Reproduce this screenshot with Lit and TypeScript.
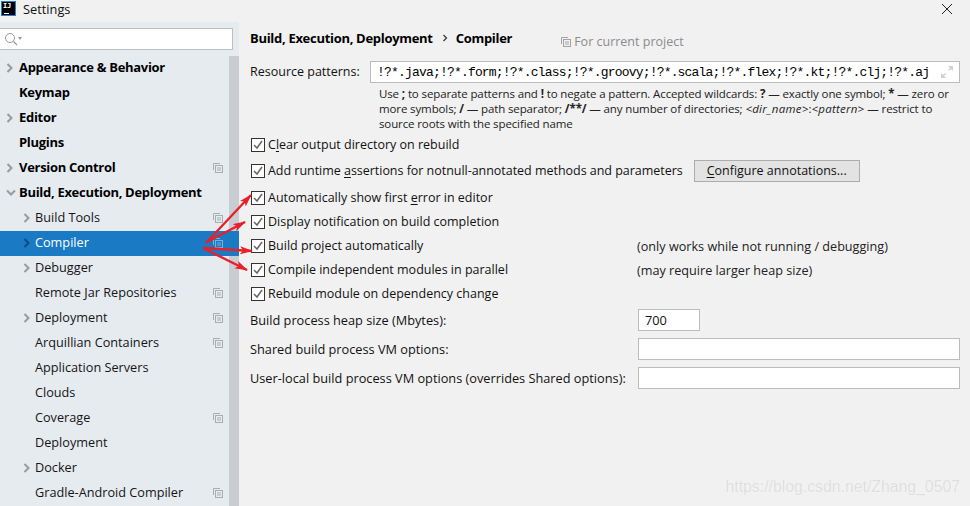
import { LitElement, html, css, svg } from "lit";
import { customElement } from "lit/decorators.js";

type Item = { t: string; lvl: 0 | 1; bold?: boolean; arrow?: "r" | "d"; proj?: boolean; sel?: boolean };
const items: Item[] = [
  { t: "Appearance & Behavior", lvl: 0, bold: true, arrow: "r" },
  { t: "Keymap", lvl: 0, bold: true },
  { t: "Editor", lvl: 0, bold: true, arrow: "r" },
  { t: "Plugins", lvl: 0, bold: true },
  { t: "Version Control", lvl: 0, bold: true, arrow: "r", proj: true },
  { t: "Build, Execution, Deployment", lvl: 0, bold: true, arrow: "d" },
  { t: "Build Tools", lvl: 1, arrow: "r", proj: true },
  { t: "Compiler", lvl: 1, arrow: "r", proj: true, sel: true },
  { t: "Debugger", lvl: 1, arrow: "r" },
  { t: "Remote Jar Repositories", lvl: 1, proj: true },
  { t: "Deployment", lvl: 1, arrow: "r", proj: true },
  { t: "Arquillian Containers", lvl: 1, proj: true },
  { t: "Application Servers", lvl: 1 },
  { t: "Clouds", lvl: 1 },
  { t: "Coverage", lvl: 1, proj: true },
  { t: "Deployment", lvl: 1 },
  { t: "Docker", lvl: 1, arrow: "r" },
  { t: "Gradle-Android Compiler", lvl: 1, proj: true },
];

const projIcon = html`<svg class="proj" width="10" height="10" viewBox="0 0 10 10" fill="none" stroke="currentColor" stroke-width="1"><path d="M.5 7V.5H7"/><rect x="2.5" y="2.5" width="7" height="7"/><path d="M4 5h4M4 7h4"/></svg>`;
const chevR = html`<svg class="chev" width="8" height="10" viewBox="0 0 8 10" fill="none" stroke="currentColor" stroke-width="2"><path d="M1.5 1l4 4-4 4"/></svg>`;
const chevD = html`<svg class="chev down" width="10" height="8" viewBox="0 0 10 8" fill="none" stroke="currentColor" stroke-width="2"><path d="M1 1.5l4 4 4-4"/></svg>`;

const arrows: [number, number, number, number][] = [
  [206, 243, 251, 195],
  [207, 242, 245, 222],
  [203, 248, 252, 251],
  [203, 248, 247, 270],
];

@customElement("app-root")
export class AppRoot extends LitElement {
  static styles = css`
    :host { display: block; position: relative; width: 970px; height: 506px; overflow: hidden; background: #f1f1f1; color: #111; font: 12.6px/18px "Open Sans", "Noto Sans", sans-serif; }
    u { text-decoration: underline; text-underline-offset: 2px; }
    .title { height: 22px; box-sizing: border-box; display: flex; align-items: center; background: #f1f1f1; padding: 0 17px 5px 1px; }
    .logo { width: 15px; height: 15px; background: #000; border: 1px solid #2a7bd0; box-sizing: border-box; color: #fff; font: bold 7px/9px "DejaVu Sans Mono", monospace; position: relative; letter-spacing: -.3px; padding-left: 1px; flex: none; }
    .logo i { position: absolute; left: 2px; bottom: 1px; width: 5px; height: 1px; background: #fff; }
    .title span { margin-left: 7px; flex: 1; font-size: 12.8px; }
    .close { flex: none; }
    .main { display: flex; height: 484px; }
    .side { width: 239px; flex: none; background: #e6ebf0; display: flex; flex-direction: column; }
    .search { height: 20px; margin: 6px 6px 0 0; background: #fff; border: 1px solid #bdbdbd; border-left: none; display: flex; align-items: center; padding-left: 4px; flex: none; }
    .body { display: flex; flex: 1; margin-top: 6px; min-height: 0; }
    .tree { flex: 1; min-width: 0; position: relative; }
    .track { width: 10px; background: #c9cdd1; flex: none; }
    .row { height: 25px; font-size: 12.7px; position: relative; color: #151515; }
    .row.b { font-size: 13px; font-weight: 700; color: #000; letter-spacing: -.3px; }
    .row .tx { position: absolute; top: 2px; white-space: nowrap; }
    .row.l0 .tx { left: 19px; }
    .row.l1 .tx { left: 35px; }
    .row .chev { position: absolute; top: 7px; color: #9a9a9a; }
    .row .chev.down { top: 8px; }
    .row.l0 .chev { left: 6px; }
    .row.l1 .chev { left: 23px; }
    .row .proj { position: absolute; top: 7px; left: 213px; color: #a9adb2; }
    .row.sel { background: #1a7ac4; color: #fff; width: 239px; z-index: 1; }
    .row.sel .chev { color: #0d4c80; }
    .row.sel .proj { color: #7fb0d8; }
    .content { flex: 1; min-width: 0; padding: 6px 10px 0 11px; display: flex; flex-direction: column; }
    .crumb { height: 20px; display: flex; align-items: center; font-size: 13px; font-weight: 700; color: #000; white-space: nowrap; letter-spacing: -.3px; }
    .crumb .sep { margin: 0 8px 0 9px; flex: none; color: #333; }
    .crumb .cur { font-size: 12.5px; letter-spacing: 0; font-weight: 400; color: #8c8c8c; display: flex; align-items: center; gap: 3px; margin: 7px 0 0 49px; }
    .crumb .cur svg { color: #a4a4a4; }
    .res { display: flex; align-items: center; margin-top: 13px; height: 22px; }
    .res label { width: 120px; flex: none; font-size: 12.5px; }
    .inp { background: #fff; border: 1px solid #bcbcbc; box-sizing: border-box; height: 22px; }
    .res .inp { flex: 1; display: flex; align-items: center; justify-content: space-between; padding: 0 5px 0 6px; font: 13px "Liberation Mono", monospace; color: #000; letter-spacing: -.81px; white-space: nowrap; min-width: 0; }
    .help { margin: 3px 0 0 129px; font-size: 11.5px; letter-spacing: -.12px; line-height: 15px; color: #222; white-space: nowrap; }
    .help b { font-weight: 700; }
    .help em { font-style: italic; letter-spacing: .25px; }
    .opts { margin-top: 2px; display: grid; grid-template-columns: 388px 1fr; align-items: center; }
    .cb { display: flex; align-items: center; gap: 3px; padding-left: 1px; white-space: nowrap; height: 24px; font-size: 12.5px; }
    .cb svg { flex: none; }
    .note { color: #222; white-space: nowrap; height: 24px; line-height: 24px; font-size: 12.65px; margin-left: -1px; }
    .first { margin-bottom: 1px; }
    .add { grid-column: 1 / 3; display: flex; align-items: center; margin-bottom: 2px; height: 26px; }
    .add .cb { letter-spacing: -.03px; }
    .btn { margin-left: 11px; width: 166px; height: 22px; box-sizing: border-box; background: #e3e3e3; border: 1px solid #adadad; text-align: center; line-height: 20px; flex: none; font-size: 12.5px; }
    .fields { margin-top: 3px; display: grid; grid-template-columns: 388px 1fr; row-gap: 7px; align-items: center; font-size: 12.75px; }
    .fields .num { width: 62px; padding-left: 6px; line-height: 20px; }
    .fields div { white-space: nowrap; }
    .arrows { position: absolute; left: 0; top: 0; pointer-events: none; z-index: 2; }
    .wm { position: absolute; right: 10px; bottom: 7px; font: 15.8px/24px "Liberation Sans", sans-serif; color: #dedede; text-shadow: 0 0 1px #fff; white-space: nowrap; }
  `;

  private cb(label: unknown) {
    return html`<div class="cb"><svg width="14" height="14" viewBox="0 0 14 14"><rect x=".5" y=".5" width="13" height="13" fill="#fff" stroke="#333"/><path d="M3 7l3 3 5-7" fill="none" stroke="#666" stroke-width="1.5"/></svg><span>${label}</span></div>`;
  }

  render() {
    return html`
      <div class="title">
        <div class="logo">IJ<i></i></div>
        <span>Settings</span>
        <svg class="close" width="12" height="12" viewBox="0 0 12 12" stroke="#222" fill="none"><path d="M1 1l10 10M11 1L1 11"/></svg>
      </div>
      <div class="main">
        <div class="side">
          <div class="search">
            <svg width="20" height="14" viewBox="0 0 20 14" fill="none"><circle cx="6" cy="6" r="4.5" stroke="#9a9a9a"/><path d="M9.5 9.5L13 13" stroke="#9a9a9a" stroke-width="1.3"/><path d="M14 5h4l-2 3z" fill="#9a9a9a"/></svg>
          </div>
          <div class="body">
            <div class="tree">
              ${items.map((i) => html`<div class="row l${i.lvl} ${i.bold ? "b" : ""} ${i.sel ? "sel" : ""}">
                ${i.arrow === "r" ? chevR : i.arrow === "d" ? chevD : ""}
                <span class="tx">${i.t}</span>
                ${i.proj ? projIcon : ""}
              </div>`)}
            </div>
            <div class="track"></div>
          </div>
        </div>
        <div class="content">
          <div class="crumb">
            <span>Build, Execution, Deployment</span>
            <svg class="sep" width="6" height="8" viewBox="0 0 6 8" fill="none" stroke="currentColor" stroke-width="1.2"><path d="M1.5 1l3 3-3 3"/></svg>
            <span>Compiler</span>
            <span class="cur"><svg width="10" height="10" viewBox="0 0 10 10" fill="none" stroke="currentColor"><path d="M.5 7V.5H7"/><rect x="2.5" y="2.5" width="7" height="7"/><path d="M4 5h4M4 7h4"/></svg>For current project</span>
          </div>
          <div class="res">
            <label>Resource patterns:</label>
            <div class="inp">
              <span>!?*.java;!?*.form;!?*.class;!?*.groovy;!?*.scala;!?*.flex;!?*.kt;!?*.clj;!?*.aj</span>
              <svg width="14" height="14" viewBox="0 0 14 14" fill="#cfcfcf"><path d="M8 1h5v5l-2-2-2 2-1-1 2-2zM1 13V8l2 2 2-2 1 1-2 2 2 2z"/></svg>
            </div>
          </div>
          <div class="help">
            Use <b>;</b> to separate patterns and <b>!</b> to negate a pattern. Accepted wildcards: <b>?</b> — exactly one symbol; <b>*</b> — zero or<br />
            more symbols; <b>/</b> — path separator; <b>/**/</b> — any number of directories; <em>&lt;dir_name&gt;</em>:<em>&lt;pattern&gt;</em> — restrict to<br />
            source roots with the specified name
          </div>
          <div class="opts">
            <div class="first" style="grid-column:1/3">${this.cb(html`C<u>l</u>ear output directory on rebuild`)}</div>
            <div class="add">
              ${this.cb(html`Add runtime <u>a</u>ssertions for notnull-annotated methods and parameters`)}
              <div class="btn"><u>C</u>onfigure annotations...</div>
            </div>
            ${this.cb(html`Automatically show first <u>e</u>rror in editor`)}<div></div>
            ${this.cb("Display notification on build completion")}<div></div>
            ${this.cb("Build project automatically")}<div class="note">(only works while not running / debugging)</div>
            ${this.cb("Compile independent modules in parallel")}<div class="note">(may require larger heap size)</div>
            ${this.cb("Rebuild module on dependency change")}<div></div>
          </div>
          <div class="fields">
            <div>Build process heap size (Mbytes):</div><div class="inp num">700</div>
            <div>Shared build process VM options:</div><div class="inp"></div>
            <div>User-local build process VM options (overrides Shared options):</div><div class="inp"></div>
          </div>
        </div>
      </div>
      <svg class="arrows" width="970" height="506" viewBox="0 0 970 506">
        <defs><marker id="a" markerWidth="14" markerHeight="10" refX="12" refY="4" orient="auto" markerUnits="userSpaceOnUse"><path d="M0 0l13 4-13 4 3-4z" fill="#e8202a"/></marker></defs>
        ${arrows.map(([x1, y1, x2, y2]) => svg`<line x1=${x1} y1=${y1} x2=${x2} y2=${y2} stroke="#e8202a" stroke-width="2.4" marker-end="url(#a)"/>`)}
      </svg>
      <div class="wm">https://blog.csdn.net/Zhang_0507</div>
    `;
  }
}
